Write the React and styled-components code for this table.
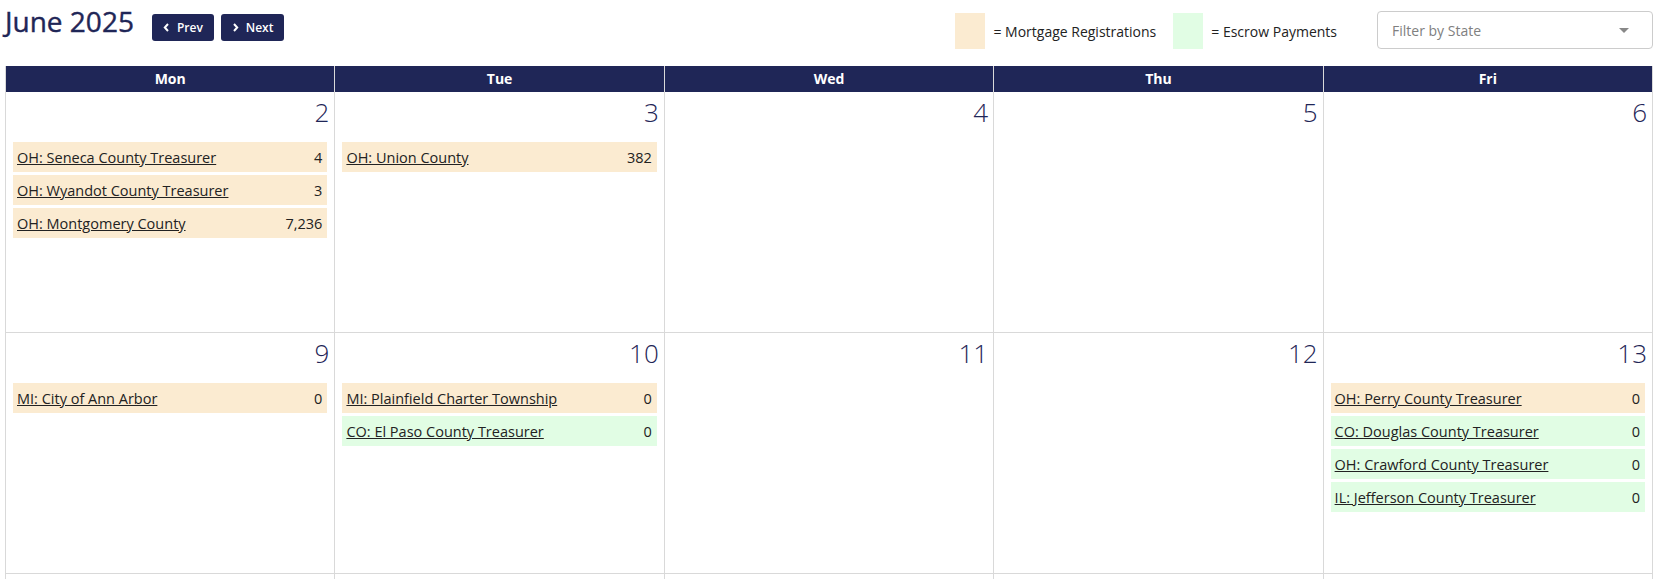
import React from 'react';
import styled, { createGlobalStyle } from 'styled-components';

const NAVY = '#1f2657';
const MORTGAGE = '#fbebd1';
const ESCROW = '#e1fde4';
const GRID = '#d9d9d9';

const weeks = [
    [
        {
            day: 2,
            events: [
                { name: 'OH: Seneca County Treasurer', count: '4', type: 'mortgage' },
                { name: 'OH: Wyandot County Treasurer', count: '3', type: 'mortgage' },
                { name: 'OH: Montgomery County', count: '7,236', type: 'mortgage' },
            ],
        },
        { day: 3, events: [{ name: 'OH: Union County', count: '382', type: 'mortgage' }] },
        { day: 4, events: [] },
        { day: 5, events: [] },
        { day: 6, events: [] },
    ],
    [
        { day: 9, events: [{ name: 'MI: City of Ann Arbor', count: '0', type: 'mortgage' }] },
        {
            day: 10,
            events: [
                { name: 'MI: Plainfield Charter Township', count: '0', type: 'mortgage' },
                { name: 'CO: El Paso County Treasurer', count: '0', type: 'escrow' },
            ],
        },
        { day: 11, events: [] },
        { day: 12, events: [] },
        {
            day: 13,
            events: [
                { name: 'OH: Perry County Treasurer', count: '0', type: 'mortgage' },
                { name: 'CO: Douglas County Treasurer', count: '0', type: 'escrow' },
                { name: 'OH: Crawford County Treasurer', count: '0', type: 'escrow' },
                { name: 'IL: Jefferson County Treasurer', count: '0', type: 'escrow' },
            ],
        },
    ],
    // next week only peeks in at the bottom of the frame
    [{ day: 16 }, { day: 17 }, { day: 18 }, { day: 19 }, { day: 20 }],
];

const days = ['Mon', 'Tue', 'Wed', 'Thu', 'Fri'];

const Chevron = ({ dir }) => (
    <svg width="7" height="9" viewBox="0 0 7 9">
        <polyline
            points={dir === 'left' ? '5,1 1.8,4.5 5,8' : '2,1 5.2,4.5 2,8'}
            fill="none"
            stroke="#fff"
            strokeWidth="2"
        />
    </svg>
);

const App = () => {
    return (
        <>
            <GlobalStyle />
            <Page>
                <Toolbar>
                    <Title>June 2025</Title>
                    <NavButtons>
                        <NavButton type="button">
                            <Chevron dir="left" /> Prev
                        </NavButton>
                        <NavButton type="button">
                            <Chevron dir="right" /> Next
                        </NavButton>
                    </NavButtons>
                    <Legend>
                        <LegendItem>
                            <Swatch type="mortgage" />
                            <span>= Mortgage Registrations</span>
                        </LegendItem>
                        <LegendItem>
                            <Swatch type="escrow" />
                            <span>= Escrow Payments</span>
                        </LegendItem>
                    </Legend>
                    <StateFilter>
                        <span>Filter by State</span>
                        <Caret />
                    </StateFilter>
                </Toolbar>

                <Calendar>
                    {days.map((d) => (
                        <DayHeader key={d}>{d}</DayHeader>
                    ))}
                    {weeks.map((week) =>
                        week.map((cell) => (
                            <DayCell key={cell.day}>
                                {cell.events && <DayNumber>{cell.day}</DayNumber>}
                                {cell.events && cell.events.length > 0 && (
                                    <EventList>
                                        {cell.events.map((ev) => (
                                            <Event key={ev.name} type={ev.type}>
                                                <EventLink href="#">{ev.name}</EventLink>
                                                <span>{ev.count}</span>
                                            </Event>
                                        ))}
                                    </EventList>
                                )}
                            </DayCell>
                        ))
                    )}
                </Calendar>
            </Page>
        </>
    );
};

const GlobalStyle = createGlobalStyle`
    html, body {
        margin: 0;
        padding: 0;
        overflow: hidden;
        background: #fff;
    }
    body {
        font-family: 'Open Sans', 'Noto Sans', sans-serif;
        color: #222;
    }
    * {
        box-sizing: border-box;
    }
`;

const Page = styled.div`
    padding: 0 5px;
`;

const Toolbar = styled.div`
    display: flex;
    align-items: flex-start;
    height: 66px;
`;

const Title = styled.h1`
    margin: 0 16px 0 0;
    font-size: 28px;
    font-weight: 500;
    line-height: 42px;
    color: ${NAVY};
    -webkit-text-stroke: 0.4px ${NAVY};
`;

const NavButtons = styled.div`
    display: flex;
    gap: 7px;
    margin-top: 14px;
    margin-left: 2px;
`;

const NavButton = styled.button`
    display: flex;
    align-items: center;
    gap: 7px;
    height: 27px;
    padding: 0 11px 0 11px;
    border: none;
    border-radius: 3px;
    background: ${NAVY};
    color: #fff;
    font-family: 'Open Sans', sans-serif;
    font-size: 12px;
    font-weight: 600;
    cursor: pointer;
`;

const Legend = styled.div`
    display: flex;
    gap: 17px;
    margin: 13px 40px 0 auto;
`;

const LegendItem = styled.div`
    display: flex;
    align-items: center;
    gap: 8px;
    font-size: 14px;
    color: #222;
`;

const Swatch = styled.div`
    width: 30px;
    height: 36px;
    background: ${(p) => (p.type === 'escrow' ? ESCROW : MORTGAGE)};
`;

const StateFilter = styled.div`
    display: flex;
    align-items: center;
    justify-content: space-between;
    width: 276px;
    height: 38px;
    margin-top: 11px;
    padding: 0 23px 0 14px;
    border: 1px solid #cccccc;
    border-radius: 4px;
    background: #fff;
    font-size: 14px;
    color: #808080;
`;

const Caret = styled.div`
    width: 0;
    height: 0;
    border-left: 5px solid transparent;
    border-right: 5px solid transparent;
    border-top: 5px solid #888;
`;

const Calendar = styled.div`
    display: grid;
    grid-template-columns: repeat(5, 1fr);
    grid-template-rows: 26px;
    grid-auto-rows: 241px;
    border-left: 1px solid ${GRID};
`;

const DayHeader = styled.div`
    line-height: 26px;
    background: ${NAVY};
    border-right: 1px solid ${GRID};
    color: #fff;
    font-size: 14px;
    font-weight: 700;
    text-align: center;
`;

const DayCell = styled.div`
    padding: 3px 7px 0;
    border-right: 1px solid ${GRID};
    border-bottom: 1px solid ${GRID};
`;

const DayNumber = styled.div`
    margin-right: -2px;
    font-size: 26px;
    font-weight: 300;
    line-height: 35px;
    color: ${NAVY};
    text-align: right;
`;

const EventList = styled.div`
    display: flex;
    flex-direction: column;
    gap: 3px;
    margin-top: 12px;
`;

const Event = styled.div`
    display: flex;
    align-items: center;
    justify-content: space-between;
    height: 30px;
    padding: 0 5px 0 4px;
    background: ${(p) => (p.type === 'escrow' ? ESCROW : MORTGAGE)};
    font-size: 14.5px;
    color: #222;
`;

const EventLink = styled.a`
    color: #222;
    text-decoration: underline;
`;

export default App;
